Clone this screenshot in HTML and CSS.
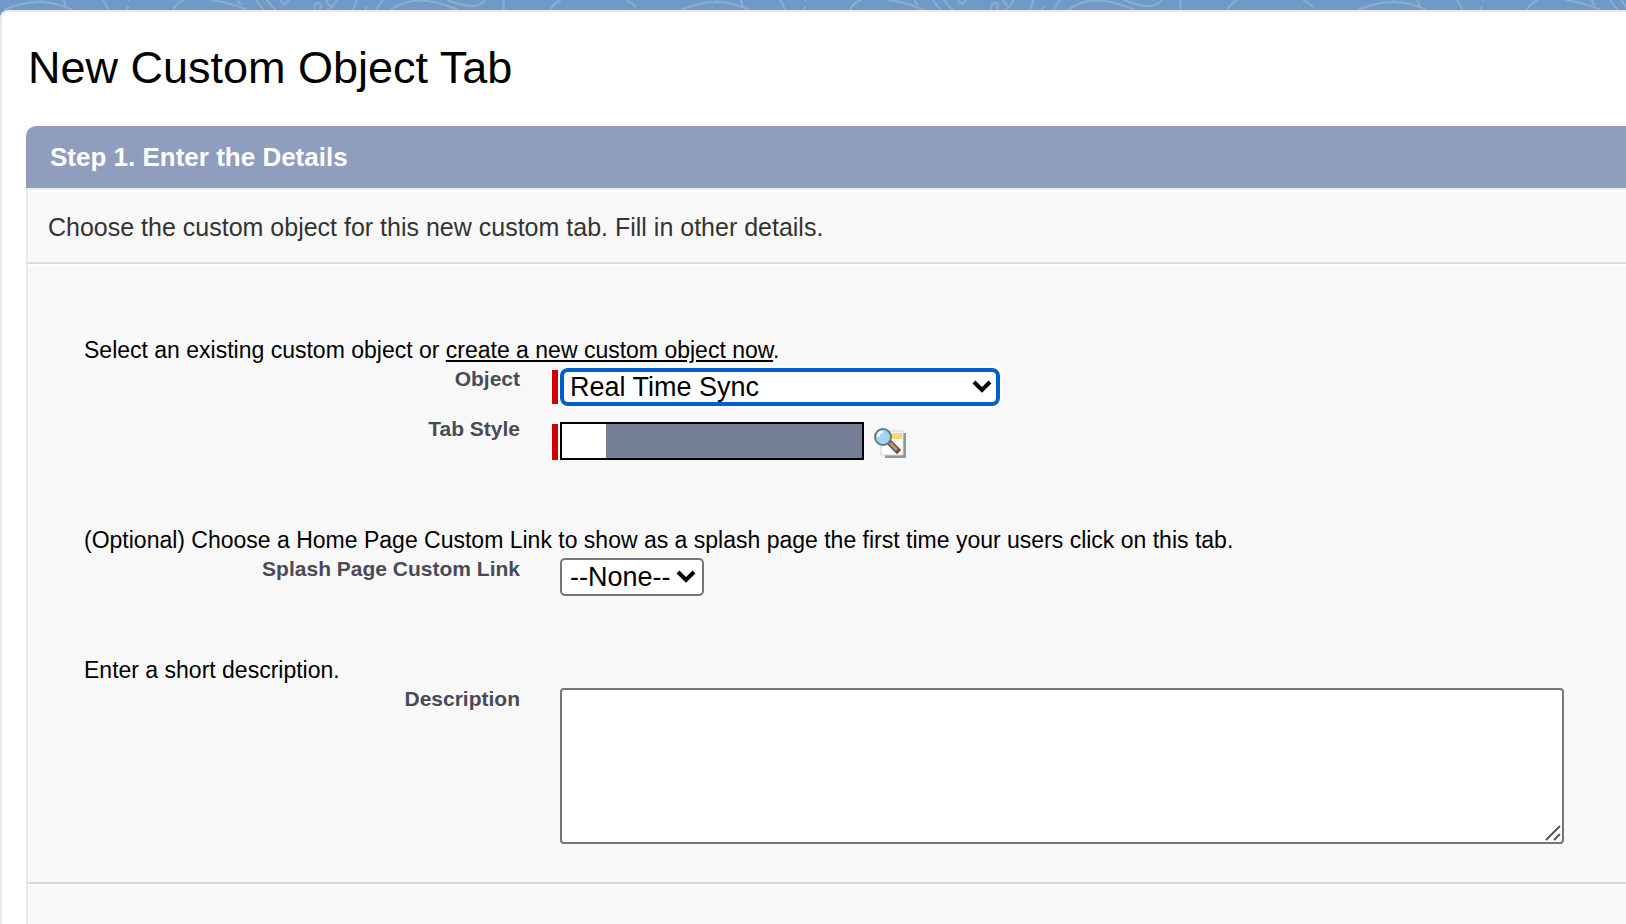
FILE: index.html
```html
<!DOCTYPE html>
<html lang="en">
<head>
    <meta charset="UTF-8">
    <meta name="viewport" content="width=device-width, initial-scale=1.0">
    <title>New Custom Object Tab</title>
    <link rel="stylesheet" href="styles.css">
</head>
<body>

    <svg class="banner" aria-hidden="true">
        <defs>
            <pattern id="swirls" width="677" height="10" patternUnits="userSpaceOnUse">
                <g fill="none" stroke="#8badd5" stroke-width="2">
                    <path d="M4 10Q40-6 72 10M39 0l3 2M63 0q3 3 2 8M103 0q3 4 5 10M128 6l-1 4M128 0l2 0"/>
                    <path d="M173 10Q176 3 184 0M211 0Q228 2 247 10M238 0q0 3 3 5M256 0q4 6 8 10M267 0q5 7 9 10M281 0q2 8 8 0"/>
                    <path d="M314 10q0-7 4-7q4 0 2 7M326 0q4 8 7 6l4-6M327 10q4 0 6-5M356 0q0 6-4 10M367 6l-2 4M377 10q2-7 7-10"/>
                    <path d="M391 10Q415-9 458 10M447 0Q477 12 485 0M504 0q-1 4 0 10M550 10q4-7 11-10M626 0q5 2 10 7"/>
                </g>
            </pattern>
        </defs>
        <rect width="100%" height="10" fill="url(#swirls)"/>
    </svg>

    <main class="page">
        <h1>New Custom Object Tab</h1>

        <form class="wizard">
            <h2 class="wizard-header">Step 1. Enter the Details</h2>
            <p class="wizard-help">Choose the custom object for this new custom tab. Fill in other details.</p>

            <div class="wizard-body">
                <section class="group">
                    <p class="intro">Select an existing custom object or <a href="#">create a new custom object now</a>.</p>
                    <div class="row">
                        <label for="object">Object</label>
                        <div class="field required">
                            <div class="select-wrap focused">
                                <select id="object">
                                    <option>Real Time Sync</option>
                                </select>
                                <svg class="chevron" viewBox="0 0 20 14"><path d="M2 3l8 8 8-8"/></svg>
                            </div>
                        </div>
                    </div>
                    <div class="row row-style">
                        <label for="tab-style">Tab Style</label>
                        <div class="field required">
                            <input type="text" id="tab-style" class="tab-style" readonly>
                            <button type="button" class="lookup" aria-label="Tab Style Lookup">
                                <svg width="36" height="36" viewBox="0 0 36 36">
                                    <path d="M11 9h23v25H13v-2" fill="#969696"/>
                                    <path d="M9 7h22v24H9z" fill="#fff" stroke="#d4d4d4"/>
                                    <path d="M20 9h10v6H20z" fill="#ffd273"/>
                                    <path d="M19 20l6 6" stroke="#5c534c" stroke-width="6" stroke-linecap="square"/>
                                    <path d="M18 19l7 7" stroke="#c89060" stroke-width="3"/>
                                    <circle cx="11" cy="13" r="8" fill="#a5d4f0" stroke="#62798e" stroke-width="2"/>
                                    <path d="M6 13q0-5 5-5" fill="none" stroke="#e2f4fd" stroke-width="3"/>
                                </svg>
                            </button>
                        </div>
                    </div>
                </section>

                <section class="group">
                    <p class="intro">(Optional) Choose a Home Page Custom Link to show as a splash page the first time your users click on this tab.</p>
                    <div class="row">
                        <label for="splash">Splash Page Custom Link</label>
                        <div class="field">
                            <div class="select-wrap">
                                <select id="splash">
                                    <option>--None--</option>
                                </select>
                                <svg class="chevron" viewBox="0 0 20 14"><path d="M2 3l8 8 8-8"/></svg>
                            </div>
                        </div>
                    </div>
                </section>

                <section class="group">
                    <p class="intro">Enter a short description.</p>
                    <div class="row">
                        <label for="description">Description</label>
                        <div class="field">
                            <textarea id="description"></textarea>
                            <svg class="grip" viewBox="0 0 16 16"><path d="M1 15L15 1M9 15l6-6"/></svg>
                        </div>
                    </div>
                </section>
            </div>

            <div class="wizard-footer"></div>
        </form>
    </main>

</body>
</html>
```
FILE: styles.css
```css
* {
    box-sizing: border-box;
}

body {
    display: flex;
    flex-direction: column;
    min-height: 100vh;
    margin: 0;
    font-family: "Liberation Sans", Arial, Helvetica, sans-serif;
    background-color: #6f9ac5;
    color: #000;
}

.banner {
    display: block;
    width: 100%;
    height: 10px;
}

/* White sheet over the blue banner */
.page {
    display: flex;
    flex-direction: column;
    flex: 1;
    padding-left: 24px;
    border-top: 2px solid #eaeaea;
    border-left: 2px solid #eaeaea;
    border-top-left-radius: 8px;
    background-color: #fff;
}

h1 {
    margin: 0;
    padding: 30px 0 32px 2px;
    font-size: 45px;
    font-weight: normal;
    line-height: 52px;
}

/* Wizard box */
.wizard {
    display: flex;
    flex-direction: column;
    flex: 1;
}

.wizard-header {
    margin: 0;
    padding: 0 24px;
    border-top-left-radius: 10px;
    background-color: #8f9dbe;
    color: #fff;
    font-size: 26px;
    line-height: 62px;
}

.wizard-help,
.wizard-body,
.wizard-footer {
    margin: 0;
    border-left: 2px solid #eaeaea;
    background-color: #f8f8f8;
    box-shadow: inset 0 2px #fff;
}

.wizard-help {
    padding: 21px 20px 19px;
    border-top: 2px solid #eaeaea;
    color: #333;
    font-size: 25px;
    line-height: 32px;
}

.wizard-body {
    padding: 73px 62px 38px 56px;
    border-top: 2px solid #dbdbdb;
}

.wizard-footer {
    flex: 1;
    border-top: 2px solid #dbdbdb;
}

/* Field groups */
.group + .group {
    margin-top: 61px;
}

.intro {
    margin: 0 0 5px;
    font-size: 23px;
    line-height: 26px;
}

.intro a {
    color: #000;
    text-decoration-thickness: 2px;
    text-underline-offset: 2px;
}

.row {
    display: grid;
    grid-template-columns: 436px 1fr;
    column-gap: 32px;
}

.row label {
    color: #4a4a56;
    font-size: 21px;
    font-weight: bold;
    line-height: 22px;
    text-align: right;
}

.row-style {
    margin-top: 12px;
    padding-bottom: 6px;
}

.row-style .field {
    padding-top: 4px;
}

.field {
    display: flex;
    position: relative;
    padding-left: 8px;
}

/* Red bar in front of a required field */
.required::before {
    content: "";
    width: 6px;
    margin: 2px 2px 2px -8px;
    background-color: #c00;
}

.row-style .required::before {
    margin-bottom: 0;
}

.select-wrap {
    position: relative;
}

.select-wrap select {
    display: block;
    width: 144px;
    height: 38px;
    padding: 0 8px;
    border: 2px solid #767676;
    border-radius: 5px;
    outline: none;
    background-color: #fff;
    color: #000;
    font-family: inherit;
    font-size: 27px;
    appearance: none;
}

.focused select {
    width: 440px;
    padding: 0 6px;
    border: 4px solid #005fcc;
    border-radius: 8px;
    box-shadow: 0 0 0 2px #fff;
}

.chevron {
    position: absolute;
    top: 11px;
    right: 8px;
    width: 20px;
    height: 14px;
    fill: none;
    stroke: #000;
    stroke-width: 4;
    pointer-events: none;
}

.tab-style {
    width: 304px;
    height: 38px;
    border: 2px solid #000;
    background: linear-gradient(to right, #fff 44px, #747e96 44px);
}

.lookup {
    height: 36px;
    margin: 2px 0 0 8px;
    padding: 0;
    border: none;
    background: none;
    cursor: pointer;
}

textarea {
    width: 100%;
    height: 156px;
    padding: 4px;
    border: 2px solid #767676;
    border-radius: 4px;
    background-color: #fff;
    font-family: inherit;
    font-size: 27px;
    resize: none;
}

.grip {
    position: absolute;
    right: 3px;
    bottom: 3px;
    width: 16px;
    height: 16px;
    stroke: #555;
    stroke-width: 2;
    pointer-events: none;
}
```
